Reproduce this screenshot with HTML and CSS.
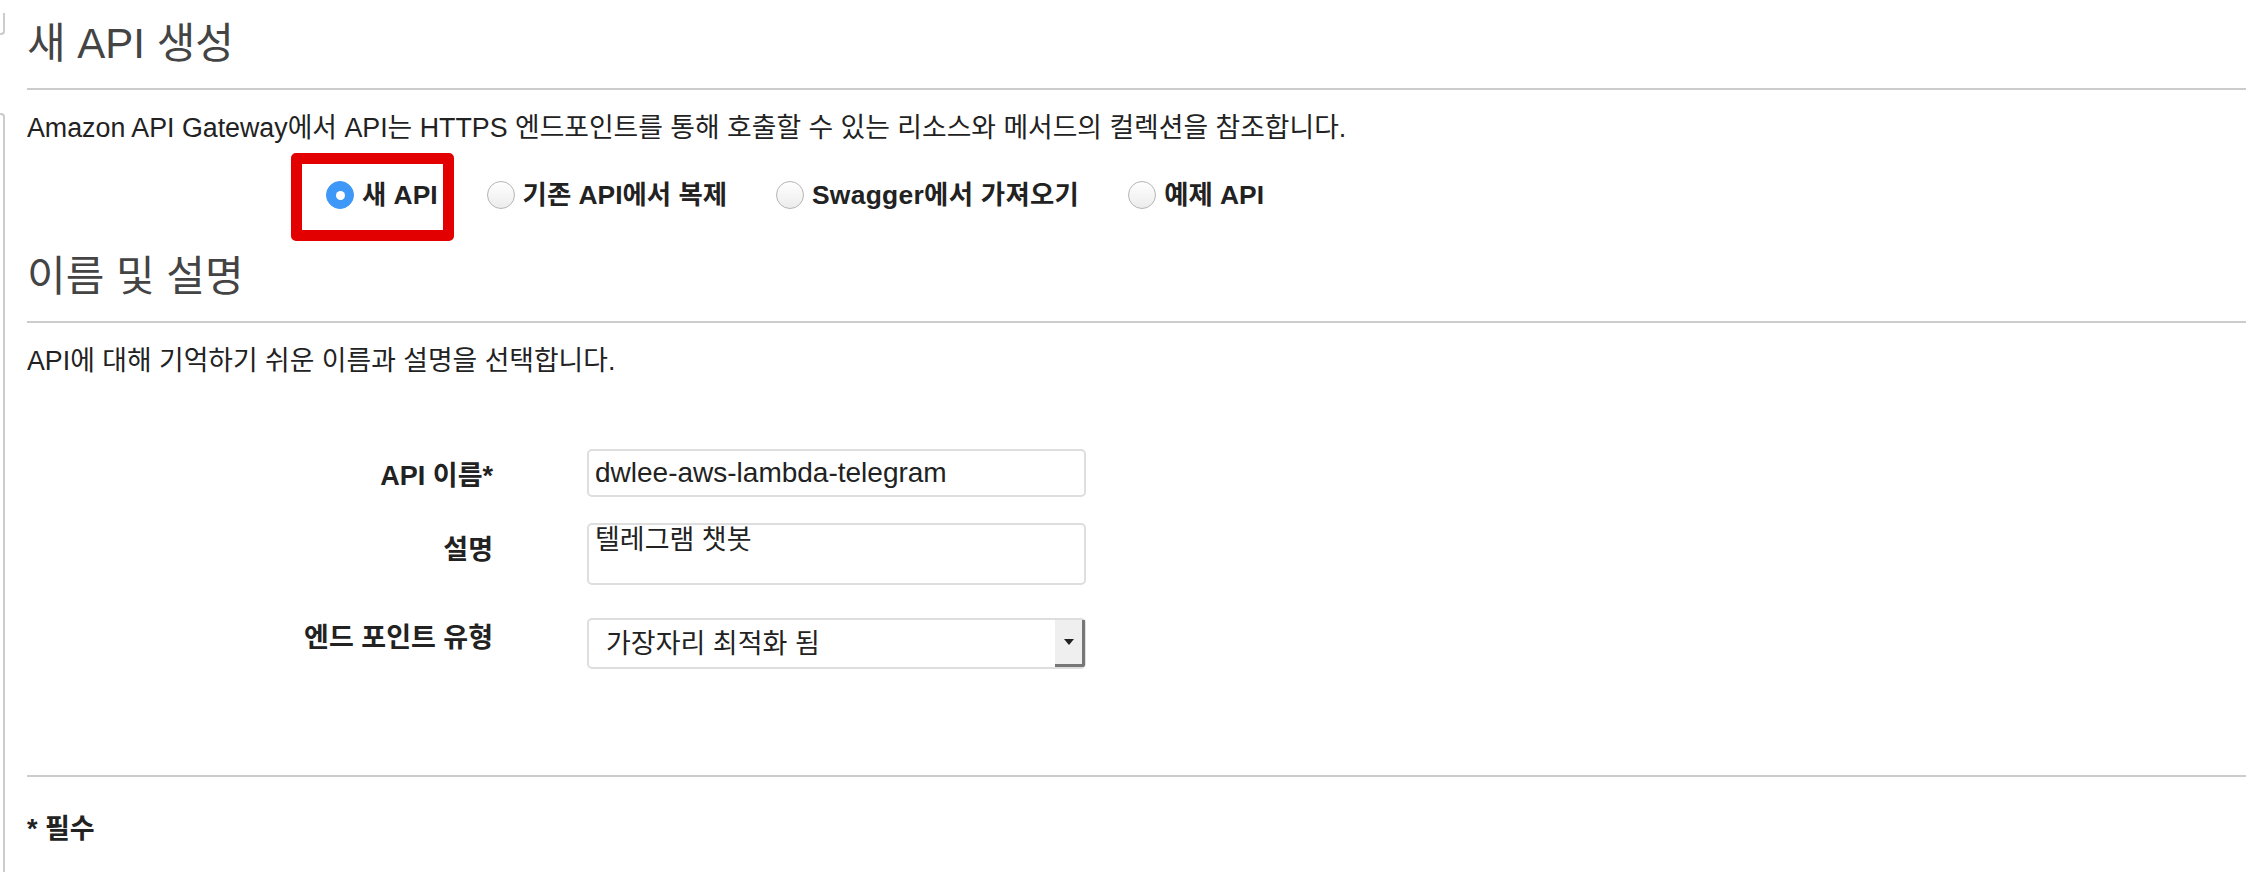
FILE: index.html
```html
<!DOCTYPE html>
<html lang="ko">
<head>
<meta charset="utf-8">
<title>새 API 생성</title>
<link rel="stylesheet" href="styles.css">
</head>
<body>
<div class="page">
  <div class="rail">
    <div class="rail-top"></div>
    <div class="rail-bottom"></div>
  </div>
  <main class="content">
    <h1 class="section-title">새 API 생성</h1>
    <p class="intro">Amazon API Gateway에서 API는 HTTPS 엔드포인트를 통해 호출할 수 있는 리소스와 메서드의 컬렉션을 참조합니다.</p>
    <div class="api-choice">
      <label class="choice"><span class="radio radio-on"></span>새 API<span class="annot"></span></label>
      <label class="choice"><span class="radio"></span>기존 API에서 복제</label>
      <label class="choice choice-wide"><span class="radio"></span>Swagger에서 가져오기</label>
      <label class="choice"><span class="radio"></span>예제 API</label>
    </div>
    <h2 class="section-title">이름 및 설명</h2>
    <p class="intro">API에 대해 기억하기 쉬운 이름과 설명을 선택합니다.</p>
    <div class="form">
      <div class="form-row row-name">
        <div class="form-label">API 이름*</div>
        <input class="field field-input" type="text" value="dwlee-aws-lambda-telegram">
      </div>
      <div class="form-row row-desc">
        <div class="form-label">설명</div>
        <textarea class="field field-area">텔레그램 챗봇</textarea>
      </div>
      <div class="form-row row-type">
        <div class="form-label form-label-select">엔드 포인트 유형</div>
        <div class="select-wrap">
          <select class="field field-select"><option>가장자리 최적화 됨</option></select>
          <span class="select-btn"><span class="select-arrow"></span></span>
        </div>
      </div>
    </div>
    <div class="footer-rule"></div>
    <p class="required">* 필수</p>
  </main>
</div>
</body>
</html>
```
FILE: styles.css
```css
* { box-sizing: border-box; }

body {
  margin: 0;
  background: #fff;
  color: #222;
  font-family: "Liberation Sans", "Noto Sans CJK KR", sans-serif;
  font-feature-settings: "palt";
}

.page {
  display: flex;
  min-height: 872px;
}

.rail {
  flex: none;
  width: 5px;
  display: flex;
  flex-direction: column;
}

.rail-top {
  margin-top: 13px;
  height: 22px;
  border-right: 2px solid #ccc;
  border-bottom: 2px solid #ccc;
  border-bottom-right-radius: 4px;
}

.rail-bottom {
  flex: 1;
  margin-top: 78px;
  border-right: 2px solid #ccc;
  border-top: 2px solid #ccc;
  border-top-right-radius: 4px;
}

.content {
  flex: 1;
  padding-left: 22px;
}

.section-title {
  margin: 0;
  padding: 19px 0;
  font-size: 42px;
  font-weight: normal;
  line-height: 50px;
  color: #444;
  border-bottom: 2px solid #ccc;
}

.intro {
  margin: 20px 0 0;
  font-size: 26.8px;
  line-height: 36px;
}

.api-choice {
  display: flex;
  align-items: center;
  gap: 49px;
  height: 40px;
  margin: 29px 0 18px;
  padding-left: 299px;
}

.choice {
  position: relative;
  display: flex;
  align-items: center;
  gap: 8px;
  height: 28px;
  font-size: 26.4px;
  font-weight: bold;
  line-height: 28px;
  color: #222;
}

.choice-wide { letter-spacing: 0.3px; }

.radio {
  flex: none;
  width: 28px;
  height: 28px;
  border-radius: 50%;
  border: 1px solid #b5b5b5;
  background: linear-gradient(#fff, #ececec);
  display: flex;
  align-items: center;
  justify-content: center;
}

.radio-on {
  border-color: #3d98f8;
  background: #3d98f8;
}

.radio-on::after {
  content: "";
  width: 9px;
  height: 9px;
  border-radius: 50%;
  background: #fff;
}

.annot {
  position: absolute;
  left: -35px;
  top: -28px;
  right: -16px;
  bottom: -32px;
  border: 11px solid #e30000;
  border-radius: 5px;
}

.form {
  margin-top: 70px;
  display: flex;
  flex-direction: column;
}

.form-row {
  display: flex;
  gap: 94px;
}

.row-desc { margin-top: 26px; }
.row-type { margin-top: 33px; }

.form-label {
  flex: none;
  width: 466px;
  padding-top: 7px;
  text-align: right;
  font-size: 27px;
  font-weight: bold;
  line-height: 40px;
  color: #222;
}

.form-label-select { padding-top: 0; }

.field {
  display: block;
  width: 499px;
  margin: 0;
  border: 2px solid #dedede;
  border-radius: 5px;
  background: #fff;
  color: #222;
  font-family: inherit;
  font-feature-settings: "palt";
  outline: none;
}

.field-input {
  height: 48px;
  padding: 0 6px;
  font-size: 28px;
}

.field-area {
  height: 62px;
  padding: 0 6px;
  font-size: 27px;
  line-height: 30px;
  resize: none;
  overflow: hidden;
}

.select-wrap {
  position: relative;
  width: 499px;
}

.field-select {
  height: 51px;
  padding: 0 0 0 17px;
  font-size: 27px;
  appearance: none;
  -webkit-appearance: none;
}

.select-btn {
  position: absolute;
  top: 2px;
  right: 1px;
  bottom: 2px;
  width: 30px;
  background: #efefef;
  border-right: 3px solid #777;
  border-bottom: 3px solid #777;
  border-bottom-right-radius: 3px;
  display: flex;
  align-items: center;
  justify-content: center;
}

.select-arrow {
  width: 0;
  height: 0;
  border-left: 5px solid transparent;
  border-right: 5px solid transparent;
  border-top: 6px solid #222;
}

.footer-rule {
  height: 2px;
  margin-top: 106px;
  background: #ccc;
}

.required {
  margin: 34px 0 0;
  font-size: 27px;
  font-weight: bold;
  line-height: 36px;
}
```
